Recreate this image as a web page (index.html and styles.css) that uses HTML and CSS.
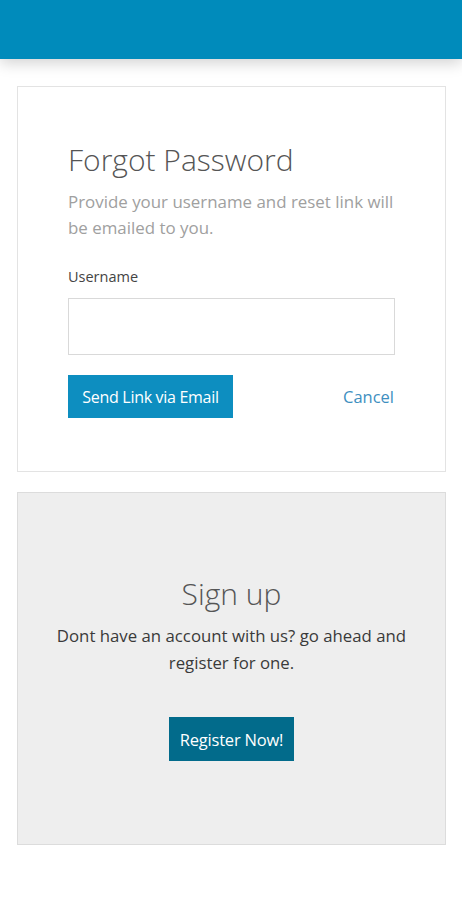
FILE: index.html
```html
<!DOCTYPE html>
<html lang="en">
<head>
    <meta charset="UTF-8">
    <meta name="viewport" content="width=device-width, initial-scale=1.0">
    <title>Forgot Password</title>
    <link rel="stylesheet" href="styles.css">
</head>
<body>
    <header class="topbar"></header>

    <main class="page">
        <section class="card forgot">
            <h1 class="card-title">Forgot Password</h1>
            <p class="card-text">Provide your username and reset link will be emailed to you.</p>

            <form class="form">
                <label class="field-label" for="username">Username</label>
                <input class="field-input" id="username" type="text">
                <div class="form-actions">
                    <button class="btn btn-primary" type="button">Send Link via Email</button>
                    <a class="link-cancel" href="#">Cancel</a>
                </div>
            </form>
        </section>

        <section class="card signup">
            <h2 class="card-title">Sign up</h2>
            <p class="signup-text">Dont have an account with us? go ahead and register for one.</p>
            <button class="btn btn-dark" type="button">Register Now!</button>
        </section>
    </main>
</body>
</html>
```

FILE: styles.css
```css
html, body {
    margin: 0;
    padding: 0;
    background: #fff;
    font-family: "Open Sans", "Liberation Sans", sans-serif;
}

.topbar {
    height: 59px;
    background-color: #008bbb;
    box-shadow: 0 4px 14px rgba(0, 0, 0, 0.18);
    position: relative;
}

.page {
    padding: 27px 16px 40px 17px;
    display: flex;
    flex-direction: column;
    gap: 20px;
}

.card {
    border: 1px solid #e3e3e3;
    box-sizing: border-box;
}

.forgot {
    padding: 55px 50px 53px 50px;
}

.card-title {
    margin: 0;
    font-size: 30px;
    line-height: 36px;
    font-weight: 300;
    color: #555;
}

.card-text {
    margin: 11px 0 0;
    font-size: 16.9px;
    line-height: 26px;
    color: #a0a0a0;
}

.form {
    margin-top: 26px;
    display: flex;
    flex-direction: column;
}

.field-label {
    font-size: 14.5px;
    line-height: 20px;
    color: #444;
}

.field-input {
    margin-top: 11px;
    height: 57px;
    box-sizing: border-box;
    border: 1px solid #d9d9d9;
    background: #fff;
    padding: 0 12px;
    font-size: 16px;
    font-family: inherit;
}

.form-actions {
    margin-top: 20px;
    display: flex;
    justify-content: space-between;
    align-items: center;
}

.btn {
    border: 0;
    color: #fff;
    font-family: inherit;
    font-size: 16px;
    height: 43px;
    padding: 0 8px;
    white-space: nowrap;
    cursor: pointer;
}

.btn-primary {
    background-color: #0d8ec0;
    width: 165px;
    letter-spacing: -0.3px;
}

.link-cancel {
    color: #3e8fbf;
    font-size: 16.5px;
    text-decoration: none;
    padding-right: 1px;
}

.signup {
    background-color: #eeeeee;
    border-color: #dcdcdc;
    padding: 83px 20px 83px;
    display: flex;
    flex-direction: column;
    align-items: center;
    text-align: center;
}

.signup-text {
    margin: 10px 0 0;
    font-size: 16.8px;
    line-height: 27px;
    color: #3a3a3a;
    max-width: 370px;
}

.btn-dark {
    margin-top: 41px;
    background-color: #026b8b;
    height: 44px;
    width: 125px;
    font-size: 16.5px;
    letter-spacing: -0.2px;
}
```
